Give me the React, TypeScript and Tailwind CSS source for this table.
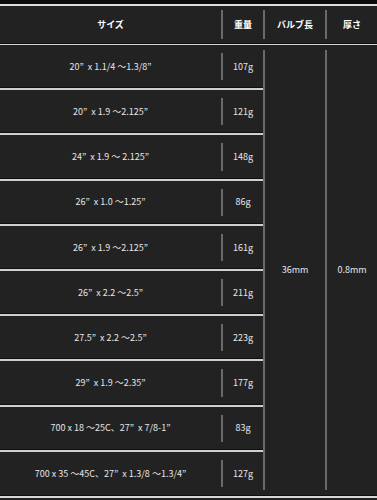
import React from 'react';

const rows = [
  { size: '20”  x 1.1/4 ～1.3/8”', weight: '107g' },
  { size: '20”  x 1.9 ～2.125”', weight: '121g' },
  { size: '24”  x 1.9 ～ 2.125”', weight: '148g' },
  { size: '26”  x 1.0 ～1.25”', weight: '86g' },
  { size: '26”  x 1.9 ～2.125”', weight: '161g' },
  { size: '26”  x 2.2 ～2.5”', weight: '211g' },
  { size: '27.5”  x 2.2 ～2.5”', weight: '223g' },
  { size: '29”  x 1.9 ～2.35”', weight: '177g' },
  { size: '700 x 18 ～25C、27”  x 7/8-1”', weight: '83g' },
  { size: '700 x 35 ～45C、27”  x 1.3/8 ～1.3/4”', weight: '127g' },
];

function Divider({ inset }: { inset: string }) {
  return <div className={`w-[2px] shrink-0 bg-[#6a6a6a] ${inset}`} />;
}

export default function App() {
  return (
    <div
      className="w-[377px] h-[500px] bg-[#222222] text-[#e6e6e6] overflow-hidden"
      style={{ fontFamily: '"Noto Sans CJK JP", "Noto Sans", sans-serif' }}
    >
      <div className="h-[4px] bg-[#0b0b0b]" />
      <div className="h-[2px] bg-[#dcdcdc]" />

      {/* header */}
      <div className="flex h-[37px] text-[9px] font-bold text-white">
        <div className="w-[221px] flex items-center justify-center">サイズ</div>
        <Divider inset="my-[4px]" />
        <div className="w-[40px] flex items-center justify-center">重量</div>
        <Divider inset="my-[4px]" />
        <div className="w-[60px] flex items-center justify-center">バルブ長</div>
        <Divider inset="my-[4px]" />
        <div className="flex-1 flex items-center justify-center">厚さ</div>
      </div>

      <div className="h-[1px] bg-[#101010]" />
      <div className="h-[1px] bg-[#d6d6d6]" />

      {/* body */}
      <div className="flex h-[450px] text-[9px]">
        <div className="w-[263px] flex flex-col">
          {rows.map((r, i) => (
            <div
              key={i}
              className={`flex h-[43.2px] shrink-0 ${i > 0 ? 'box-content border-t-2 border-[#cfcfcf] shadow-[0_-1px_0_#0f0f0f]' : ''}`}
            >
              <div className="w-[221px] flex items-center justify-center whitespace-pre">{r.size}</div>
              <Divider inset="my-[8px]" />
              <div className="flex-1 flex items-center justify-center">{r.weight}</div>
            </div>
          ))}
        </div>
        <Divider inset="my-[5px]" />
        <div className="w-[60px] flex items-center justify-center">36mm</div>
        <Divider inset="my-[5px]" />
        <div className="flex-1 flex items-center justify-center">0.8mm</div>
      </div>

      <div className="h-[1px] bg-[#101010]" />
      <div className="h-[2px] bg-[#d6d6d6]" />
    </div>
  );
}
